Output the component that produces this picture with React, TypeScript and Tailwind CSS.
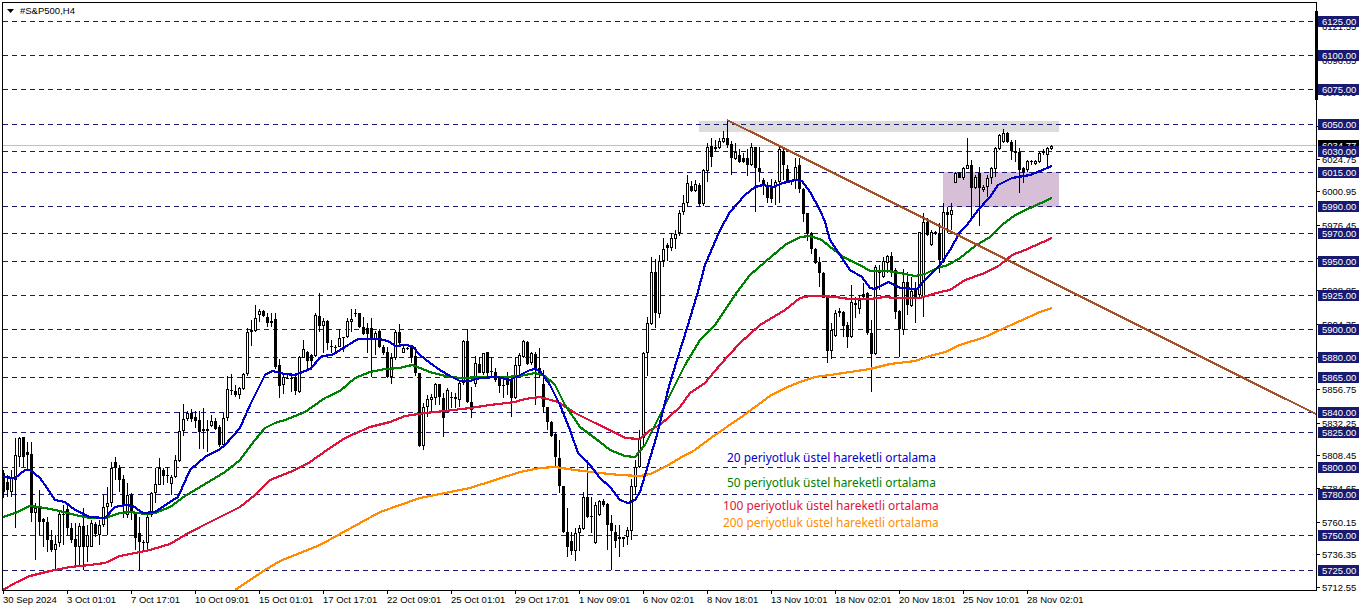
import React from "react";

type Row = [number, number, number, number, number];
const z = (base: number, rows: Row[]): Row[] =>
  rows.map(([h, t, b, l, w]) => [base + h / 3, base + t / 3, base + b / 3, base + l / 3, w] as Row);

const candles: Row[] = [
  ...z(420, [
    [150,160,215,235,0],[165,185,210,230,0],[150,175,215,230,1],[55,105,180,325,1],[50,55,110,140,1],[52,52,110,140,0],[65,95,105,150,0],[65,102,280,305,0],
    [250,265,280,420,1],[210,265,305,345,0],[295,298,305,380,0],[290,305,360,395,0],[330,360,390,395,0],[345,373,390,450,1],[270,283,370,380,1],[255,282,284,375,0],
    [250,268,325,345,0],[310,325,360,370,0],[310,358,380,438,0],[310,318,380,435,1],[265,318,380,450,0],[315,345,382,425,1],[300,308,380,380,1],[305,313,343,350,0],
    [300,315,345,375,1],[225,262,315,320,1],[200,250,262,345,1],[125,143,250,260,1],[110,127,145,180,0],[135,143,180,215,0],[165,178,255,295,0],[190,225,285,295,1],
    [220,225,280,300,0],[275,278,355,390,0],[290,340,365,450,0],[360,365,370,395,0],[275,290,368,395,1],[215,218,285,290,1],[145,193,218,250,1],[115,145,195,195,1],
    [145,150,167,195,0],[140,165,168,190,1],[165,170,192,225,1],[105,120,170,175,1],[-24,32,122,125,1],
  ]),
  ...z(290, [
    [342,388,422,437,1],[362,370,388,392,1],[358,368,388,395,0],[362,382,392,415,0],[362,390,425,478,0],[355,418,422,478,0],[390,418,422,485,0],[375,393,408,410,1],
    [385,393,418,420,0],[405,410,465,470,0],[370,385,465,470,1],[258,298,385,392,1],[252,300,302,315,0],[285,303,315,320,0],[290,295,315,328,1],
  ]),
  ...z(290, [
    [248,252,298,300,1],[115,125,252,258,1],[90,120,125,168,0],[45,85,122,125,1],[58,63,75,95,1],[60,62,78,80,0],[68,80,98,110,0],[70,92,100,110,1],
    [70,88,232,238,0],[207,225,288,325,0],[255,262,285,312,1],[255,263,264,268,0],[250,263,264,305,0],[250,262,302,315,0],[198,200,305,310,1],[150,178,205,205,1],
    [183,185,212,240,0],[192,195,212,240,0],[68,75,198,200,1],[8,78,108,125,0],[85,93,107,190,1],[90,92,160,180,0],[150,168,169,190,0],[165,170,171,190,0],
    [118,145,170,172,1],[140,142,143,185,0],[85,93,140,145,1],[58,88,95,125,1],[58,69,73,80,0],[68,70,112,115,0],[82,112,132,135,0],[100,115,132,190,0],
    [85,115,150,262,0],[122,128,150,195,1],[118,122,170,175,0],[165,170,190,195,0],[170,187,262,265,0],[190,205,260,282,1],[120,125,205,210,1],[103,125,160,168,0],
    [165,175,188,190,1],[170,175,176,180,0],[168,172,200,220,0],[170,198,250,258,0],[248,250,468,470,0],[340,350,468,480,1],[315,328,350,380,1],[312,322,330,365,1],
    [280,283,325,345,1],[283,283,322,345,0],[310,325,385,440,0],[295,300,365,370,1],[305,321,323,355,0],[310,322,328,355,0],[275,278,330,350,1],[150,153,280,285,1],
    [118,153,335,340,0],[290,335,360,385,0],[198,220,282,290,1],[200,222,248,250,0],[188,190,250,255,1],[185,187,248,262,0],[200,244,246,260,0],[235,247,270,275,0],
    [260,265,288,310,0],[265,284,286,325,0],[245,265,285,315,0],[268,270,325,380,0],[200,225,325,328,1],[190,195,228,265,1],[150,153,200,205,1],[152,155,222,225,0],
    [185,190,218,225,1],[185,192,235,345,0],[175,235,250,265,0],
  ]),
  ...z(230, [
    [420,462,532,550,0],[530,532,577,600,0],[572,575,617,620,0],[610,612,680,708,0],[630,685,768,788,0],[768,768,905,910,0],[835,905,950,980,0],[905,932,962,975,0],
    [895,908,962,992,1],[885,895,908,962,1],[785,802,897,900,1],[690,800,862,865,0],[800,857,859,908,0],[815,825,938,942,1],[810,813,855,858,1],[808,813,825,830,0],
    [820,822,885,960,0],[855,880,902,1020,0],[885,905,932,955,0],[885,922,928,980,0],[920,922,928,950,0],[890,900,922,945,1],[748,768,902,930,1],[690,712,770,795,1],
    [600,625,712,715,1],[365,370,625,650,1],[262,280,368,438,1],[80,125,282,285,1],[88,125,250,295,0],[75,92,252,265,1],[25,58,92,112,1],[40,45,55,92,0],
    [8,25,55,62,1],[0,12,28,58,1],
  ]),
  ...z(110, [
    [300,310,370,378,1],[255,278,305,315,1],[195,220,280,290,1],[212,228,243,245,0],[210,222,242,245,1],[218,225,282,290,0],[178,180,282,288,1],[100,112,182,215,1],
    [85,108,142,170,0],[90,112,118,122,1],[85,92,115,118,1],[62,85,95,100,1],[30,85,105,115,0],[92,102,145,195,0],[100,125,148,150,1],[118,135,155,158,0],
    [130,145,155,158,0],[118,145,165,198,0],[100,112,165,168,1],[110,112,175,305,0],[110,175,185,215,0],[205,210,225,255,0],[215,225,265,278,0],[208,230,268,278,0],
    [210,215,232,285,1],[110,118,215,280,1],[112,122,165,210,0],[165,178,212,215,0],[210,212,213,225,0],[145,170,212,238,1],[145,165,238,250,0],[235,238,312,335,0],
    [310,310,370,392,0],[365,368,418,432,0],[415,418,460,462,0],[440,455,490,530,0],[485,488,565,565,0],
  ]),
  ...z(240, [
    [172,172,332,368,0],[250,270,332,358,1],[210,220,288,290,1],[205,212,220,230,1],[212,215,258,292,0],[245,255,290,325,0],[135,185,292,295,1],[170,188,195,235,0],
    [165,180,208,222,1],[130,163,172,175,0],[155,160,280,285,0],[240,278,342,455,0],[75,82,342,345,1],[75,92,100,150,0],[50,62,112,115,1],[45,48,68,98,1],
    [35,48,92,110,0],[85,90,215,238,0],[210,212,268,352,0],[88,125,270,285,1],[95,125,195,225,0],[110,152,198,200,1],[125,148,175,250,0],
  ]),
  ...z(110, [
    [365,365,555,565,1],[310,335,560,620,1],[325,335,375,378,0],[360,365,405,408,1],[362,365,372,375,0],[340,370,450,490,0],[280,305,455,460,1],[290,305,315,370,0],
    [280,300,315,360,1],[185,190,218,218,1],[185,188,205,205,0],[172,175,205,210,1],[85,165,178,178,1],[150,165,235,320,0],[195,200,235,238,1],[172,188,235,348,0],
    [225,230,240,245,1],[195,205,232,260,1],[170,175,205,222,1],[112,115,178,200,1],[72,75,118,120,1],[58,68,95,98,1],[65,68,95,100,0],[90,95,122,150,0],
    [90,122,130,155,1],[115,125,180,248,0],[170,175,185,218,0],[150,153,180,185,1],[150,154,156,165,0],[150,152,162,165,1],[125,130,155,160,1],[118,122,130,135,1],
    [112,115,135,170,1],[105,108,118,120,1],
  ]),
];

const blue =
  "3,477 15,478 25,470 30,470 40,478 47,488 55,500 65,502 75,510 90,517 105,518 115,507 125,505 133,506 143,513 155,512 170,502 178,497 190,470 205,457 220,449 225,445 240,428 250,405 265,375 272,371 285,374 295,375 310,369 322,356 332,355 345,347 358,339 365,339 380,339 390,342 395,346 405,345 412,346 420,355 430,363 440,370 450,376 460,381 470,381 480,378 497,377 510,380 520,375 530,370 535,369 540,371 550,385 560,405 570,430 578,453 590,465 600,478 610,487 620,500 628,503 635,500 640,492 648,465 657,435 668,390 677,360 688,325 697,295 705,265 720,230 730,212 745,195 755,187 763,185 773,187 783,183 795,180 802,181 810,192 820,210 825,222 830,240 840,255 850,270 862,277 870,288 875,289 888,282 895,285 900,288 917,289 925,280 940,265 950,250 960,232 967,225 978,210 990,197 998,185 1012,178 1030,175 1040,171 1052,166";
const green =
  "3,517 15,513 30,506 45,508 60,511 75,515 90,518 105,518 120,513 130,512 145,514 155,513 170,507 185,496 200,487 215,478 225,472 240,460 255,440 265,428 275,423 285,420 305,412 325,398 340,391 355,378 370,372 385,369 400,368 412,365 420,368 430,372 445,376 460,378 485,377 505,377 520,376 535,373 545,376 555,385 565,405 580,427 600,442 610,450 625,456 635,457 645,445 655,425 670,395 685,365 700,340 715,325 735,295 750,275 765,262 785,245 800,237 810,236 822,240 830,247 845,258 860,265 870,271 888,271 900,273 915,276 925,274 937,268 948,265 960,258 975,246 990,237 1002,225 1015,215 1030,208 1052,198";
const red =
  "3,590 15,583 30,576 50,571 70,567 90,565 105,563 120,556 135,553 150,550 170,544 185,535 200,527 220,517 240,507 255,495 270,480 295,470 310,462 330,448 345,438 370,427 390,422 405,416 425,413 445,411 470,408 490,405 515,402 525,399 540,397 558,402 575,413 595,423 610,430 625,438 640,439 650,430 660,425 680,407 690,393 705,383 720,365 740,343 760,325 785,310 800,298 810,296 822,296 835,297 850,299 870,299 885,297 895,298 920,298 930,295 940,292 950,290 965,280 985,273 1000,265 1012,255 1025,250 1052,238";
const orange =
  "235,590 250,580 265,570 280,561 300,553 320,545 340,534 380,512 420,498 470,488 520,472 540,468 555,467 575,470 600,473 620,475 640,476 650,474 665,467 680,458 695,450 715,435 740,418 770,396 785,388 800,382 815,377 830,375 850,372 870,369 890,364 915,361 930,356 945,352 960,345 985,337 1000,330 1020,321 1040,312 1052,308";

const grid = [21, 55, 89, 124, 151, 172, 206, 233, 261, 295, 329, 357, 377, 412, 432, 467, 494, 535, 570];

const boxes: [string, number][] = [
  ["6125.00", 21], ["6100.00", 55], ["6075.00", 89], ["6050.00", 124], ["6030.00", 151], ["6015.00", 172], ["5990.00", 206],
  ["5970.00", 233], ["5950.00", 261], ["5925.00", 295], ["5900.00", 329], ["5880.00", 357], ["5865.00", 377], ["5840.00", 412],
  ["5825.00", 432], ["5800.00", 467], ["5780.00", 494], ["5750.00", 535], ["5725.00", 570],
];
const scale = ["6121.55","6096.85","6073.05","6048.55","6024.75","6000.95","5976.45","5952.65","5928.85","5904.35","5880.55","5856.75","5832.25","5808.45","5784.65","5760.15","5736.35","5712.55"];
const yOf = (p: number) => 21 + (6125 - p) * 1.3725;

const times = ["30 Sep 2024","3 Oct 01:01","7 Oct 17:01","10 Oct 09:01","15 Oct 01:01","17 Oct 17:01","22 Oct 09:01","25 Oct 01:01","29 Oct 17:01","1 Nov 09:01","6 Nov 02:01","8 Nov 18:01","13 Nov 10:01","18 Nov 02:01","20 Nov 18:01","25 Nov 10:01","28 Nov 02:01"];

function Chart() {
  return (
    <svg className="absolute left-0 top-0 block" width={1313} height={587} viewBox="3 3 1313 587" shapeRendering="crispEdges">
      <rect x={699} y={121} width={360} height={11} fill="#dcdcdc" />
      <rect x={943} y={172} width={116} height={35} fill="#d8bfd8" />
      <line x1={3} x2={1316} y1={145.5} y2={145.5} stroke="#c0c0c0" strokeWidth={1} />
      {grid.map((y) => (
        <line key={y} x1={3} x2={1316} y1={y + 0.5} y2={y + 0.5} stroke="#191970" strokeWidth={1} strokeDasharray="5 4" />
      ))}
      {candles.map(([h, t, b, l, w], i) => {
        const x = 3 + 4 * i;
        const T = Math.round(t);
        const H = Math.max(1, Math.round(b) - T);
        return (
          <g key={i}>
            <rect x={x} y={Math.round(h)} width={1} height={Math.max(1, Math.round(l) - Math.round(h))} fill="#000" />
            <rect x={x - 1} y={T} width={3} height={H} fill="#000" />
            {w === 1 && H > 2 && <rect x={x} y={T + 1} width={1} height={H - 2} fill="#fff" />}
          </g>
        );
      })}
      <polyline points={orange} fill="none" stroke="#ff8c00" strokeWidth={2.2} />
      <polyline points={red} fill="none" stroke="#dc143c" strokeWidth={2.2} />
      <polyline points={green} fill="none" stroke="#008000" strokeWidth={2.2} />
      <polyline points={blue} fill="none" stroke="#0000cd" strokeWidth={2.2} />
      <line x1={727} y1={120} x2={1316} y2={414} stroke="#a0522d" strokeWidth={2.2} />
    </svg>
  );
}

export default function App() {
  return (
    <div className="relative h-[611px] w-[1362px] overflow-hidden bg-white pl-[2px] pt-[2px] text-[9.5px] leading-[11px] text-black [font-family:'Liberation_Sans',sans-serif]">
      <div className="flex h-[589px]">
        <div className="relative h-[589px] w-[1315px] border border-black">
          <Chart />
          <div className="absolute left-[4px] top-[2px] flex items-center gap-[6px]">
            <svg width="7" height="4" viewBox="0 0 7 4"><path d="M0 0h7L3.5 4z" fill="#000" /></svg>
            <span className="text-[9.5px]">#S&amp;P500,H4</span>
          </div>
          <div className="absolute left-[724px] top-[446px] text-[11.9px] leading-[16px] text-[#0000cd] [font-family:'Noto_Sans',sans-serif]">20 periyotluk üstel hareketli ortalama</div>
          <div className="absolute left-[724px] top-[471px] text-[11.9px] leading-[16px] text-[#008000] [font-family:'Noto_Sans',sans-serif]">50 periyotluk üstel hareketli ortalama</div>
          <div className="absolute left-[720px] top-[494px] text-[11.9px] leading-[16px] text-[#dc143c] [font-family:'Noto_Sans',sans-serif]">100 periyotluk üstel hareketli ortalama</div>
          <div className="absolute left-[720px] top-[511px] text-[11.9px] leading-[16px] text-[#ff8c00] [font-family:'Noto_Sans',sans-serif]">200 periyotluk üstel hareketli ortalama</div>
        </div>
        <div className="relative w-[45px]">
          <div className="absolute left-[-2px] top-[9px] h-[89px] w-[3px] bg-black" />
          {scale.map((s) => {
            const y = yOf(parseFloat(s)) - 2;
            return (
              <React.Fragment key={s}>
                <div className="absolute left-0 h-px w-[3px] bg-black" style={{ top: Math.round(y) }} />
                <div className="absolute left-[5px] whitespace-nowrap" style={{ top: Math.round(y) - 5 }}>{s}</div>
              </React.Fragment>
            );
          })}
          <div className="absolute left-px top-[138px] h-[11px] w-[41px] bg-black pl-[4px] text-white">6034.77</div>
          {boxes.map(([s, y]) => (
            <div key={s} className="absolute left-px h-[11px] w-[41px] bg-[#191970] pl-[4px] text-white" style={{ top: y - 7 }}>{s}</div>
          ))}
        </div>
      </div>
      <div className="ml-px flex">
        {times.map((t) => (
          <div key={t} className="w-[64px] shrink-0">
            <div className="h-[3px] w-px bg-black" />
            <div className="whitespace-nowrap">{t}</div>
          </div>
        ))}
      </div>
    </div>
  );
}
